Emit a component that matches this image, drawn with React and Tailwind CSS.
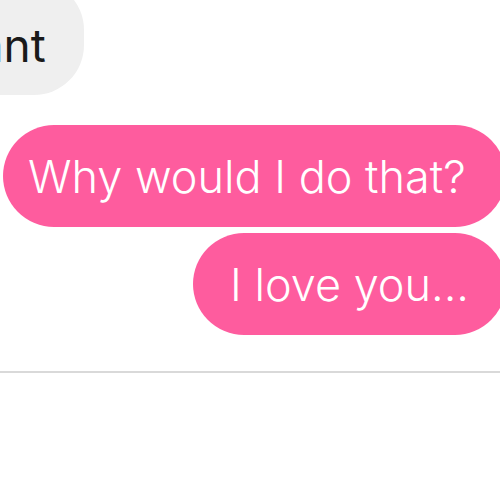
export default function App() {
  return (
    <div
      className="w-[500px] h-[500px] bg-white overflow-hidden relative"
      style={{ fontFamily: "Inter, 'Noto Sans', sans-serif" }}
    >
      <div className="flex flex-col">
        <div className="flex">
          <div className="ml-[-100px] mt-[-20px] h-[115px] pl-[40px] pr-[38px] rounded-[50px] bg-[#efefef] flex items-center pt-[14px]">
            <span className="text-[46px] text-[#1a1a1a] leading-none">want</span>
          </div>
        </div>
        <div className="flex justify-end mt-[30px] mr-[-6px]">
          <div className="h-[102px] w-[503px] rounded-[51px] bg-[#fe5c9e] flex items-center pl-[25px]">
            <span className="text-[45px] font-light text-white leading-none">Why would I do that?</span>
          </div>
        </div>
        <div className="flex justify-end mt-[6px] mr-[-6px]">
          <div className="h-[102px] w-[313px] rounded-[51px] bg-[#fe5c9e] flex items-center pl-[37px]">
            <span className="text-[45px] font-light text-white leading-none">I love you...</span>
          </div>
        </div>
        <div className="mt-[36px] h-[2px] bg-[#d9d9d9]" />
      </div>
    </div>
  );
}
